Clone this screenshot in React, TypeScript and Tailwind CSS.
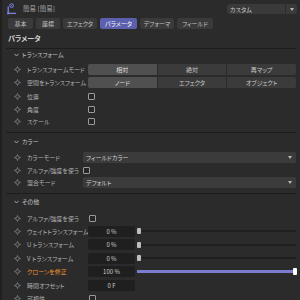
const font = "font-['Noto_Sans_CJK_JP','Noto_Sans',sans-serif] [font-feature-settings:'palt']";

function Key() {
  return (
    <svg width="7" height="7" viewBox="0 0 7 7" className="shrink-0">
      <circle cx="3.5" cy="3.5" r="1.8" fill="none" stroke="#7e7e7e" strokeWidth="1" />
      <path d="M3.5 0.2v1M3.5 5.8v1M0.2 3.5h1M5.8 3.5h1" stroke="#7e7e7e" strokeWidth="0.9" />
    </svg>
  );
}

function Chevron() {
  return (
    <svg width="5" height="4" viewBox="0 0 5 4" className="shrink-0">
      <path d="M0.5 0.8 2.5 3 4.5 0.8" fill="none" stroke="#a8a8a8" strokeWidth="1" />
    </svg>
  );
}

function Arrow() {
  return (
    <svg width="4" height="3" viewBox="0 0 4 3" className="shrink-0">
      <path d="M0 0h4L2 3z" fill="#b8b8b8" />
    </svg>
  );
}

function Check() {
  return <div className="w-[7px] h-[7px] border border-[#9a9a9a] rounded-[1px] bg-[#262626]" />;
}

function GroupHeader({ title }: { title: string }) {
  return (
    <div className="flex items-center h-[12px] pl-[12px] gap-[3px] text-[#c4c4c4]">
      <Chevron />
      <span className="leading-[12px]">{title}</span>
    </div>
  );
}

function Line() {
  return <div className="ml-[4px] mr-[4px] border-t border-[#1d1d1d]" />;
}

function Segments({ items, active }: { items: string[]; active: number }) {
  return (
    <div className="flex-1 flex h-[11px] gap-[1px] rounded-[2px] overflow-hidden">
      {items.map((t, i) => (
        <div
          key={t}
          className={
            i === active
              ? "flex-1 flex items-center justify-center bg-[#505050] text-[#dedede]"
              : "flex-1 flex items-center justify-center bg-[#3b3b3b] text-[#c8c8c8]"
          }
        >
          {t}
        </div>
      ))}
    </div>
  );
}

function Field({ value }: { value: string }) {
  return (
    <div className="w-[47px] h-[11px] shrink-0 rounded-[2px] bg-[#1f1f1f] flex items-center justify-center text-[#cfcfcf]">
      {value}
    </div>
  );
}

function Slider() {
  return (
    <div className="flex-1 flex items-center ml-[2px]">
      <div className="w-[4px] h-[6px] rounded-[1px] bg-[#bdbdbd]" />
      <div className="flex-1 h-[2px] bg-[#1f1f1f]" />
    </div>
  );
}

function Select({ value }: { value: string }) {
  return (
    <div className="flex-1 h-[11px] rounded-[2px] bg-[#3b3b3b] flex items-center justify-between pl-[3px] pr-[4px] text-[#d0d0d0]">
      <span>{value}</span>
      <Arrow />
    </div>
  );
}

export default function App() {
  return (
    <div className={`w-[300px] h-[300px] overflow-hidden bg-[#2b2b2b] border-l-2 border-[#202020] text-[#b2b2b2] text-[6px] ${font}`}>
      {/* title bar */}
      <div className="flex items-center justify-between h-[10px] mt-[4px] pl-[4px] pr-[3px]">
        <div className="flex items-center gap-[6px]">
          <svg width="11" height="12" viewBox="0 0 11 12">
            <path d="M2.2 3.5V10.3H10" fill="none" stroke="#7c82e4" strokeWidth="1.3" />
            <circle cx="5.6" cy="2.6" r="1.9" fill="none" stroke="#7c82e4" strokeWidth="1" />
            <circle cx="5.6" cy="2.6" r="0.6" fill="#7c82e4" />
            <rect x="1.2" y="9.3" width="2" height="2" fill="#7c82e4" />
          </svg>
          <span className="text-[#a8a8a8] text-[6.5px]">簡易 [簡易]</span>
        </div>
        <div className="w-[70px] h-[10px] rounded-[3px] bg-[#3a3a3a] flex items-center overflow-hidden">
          <span className="flex-1 pl-[3px] text-[#cdcdcd]">カスタム</span>
          <div className="w-[12px] h-full border-l border-[#2b2b2b] flex items-center justify-center">
            <Arrow />
          </div>
        </div>
      </div>

      {/* tabs */}
      <div className="flex mt-[4px] h-[11px] pl-[6px] gap-[3px] text-[#c2c2c2]">
        <div className="w-[25px] rounded-[2px] bg-[#3a3a3a] flex items-center justify-center">基本</div>
        <div className="w-[24px] rounded-[2px] bg-[#3a3a3a] flex items-center justify-center">座標</div>
        <div className="w-[34px] rounded-[2px] bg-[#3a3a3a] flex items-center justify-center">エフェクタ</div>
        <div className="w-[37px] rounded-[2px] bg-[#5c5eae] text-white flex items-center justify-center">パラメータ</div>
        <div className="w-[34px] rounded-[2px] bg-[#3a3a3a] flex items-center justify-center">デフォーマ</div>
        <div className="w-[36px] rounded-[2px] bg-[#3a3a3a] flex items-center justify-center">フィールド</div>
      </div>

      <div className="mt-[3px] h-[12px] leading-[12px] pl-[6px] text-[7px] font-bold text-[#d2d2d2]">パラメータ</div>

      <div className="mt-[4px]">
        <Line />
      </div>

      {/* transform */}
      <GroupHeader title="トランスフォーム" />
      <div className="mt-[2px]">
        <div className="flex items-center h-[13px] pl-[12px] pr-[4px]">
          <Key />
          <span className="ml-[6px] w-[61px] shrink-0 whitespace-nowrap">トランスフォームモード</span>
          <Segments items={["相対", "絶対", "再マップ"]} active={0} />
        </div>
        <div className="flex items-center h-[13px] pl-[12px] pr-[4px]">
          <Key />
          <span className="ml-[6px] w-[61px] shrink-0 whitespace-nowrap">空間をトランスフォーム</span>
          <Segments items={["ノード", "エフェクタ", "オブジェクト"]} active={0} />
        </div>
        <div className="flex items-center h-[14px] pl-[12px] pr-[4px]">
          <Key />
          <span className="ml-[6px] w-[61px] shrink-0">位置</span>
          <Check />
        </div>
        <div className="flex items-center h-[12px] pl-[12px] pr-[4px]">
          <Key />
          <span className="ml-[6px] w-[61px] shrink-0">角度</span>
          <Check />
        </div>
        <div className="flex items-center h-[12px] pl-[12px] pr-[4px]">
          <Key />
          <span className="ml-[6px] w-[61px] shrink-0">スケール</span>
          <Check />
        </div>
      </div>

      <div className="mt-[5px]">
        <Line />
      </div>

      {/* color */}
      <div className="mt-[3px]">
        <GroupHeader title="カラー" />
      </div>
      <div className="mt-[3px]">
        <div className="flex items-center h-[13px] pl-[12px] pr-[4px]">
          <Key />
          <span className="ml-[6px] w-[56px] shrink-0">カラーモード</span>
          <Select value="フィールドカラー" />
        </div>
        <div className="flex items-center h-[12px] pl-[12px] pr-[4px]">
          <Key />
          <span className="ml-[6px] w-[56px] shrink-0 whitespace-nowrap">アルファ/強度を使う</span>
          <Check />
        </div>
        <div className="flex items-center h-[13px] pl-[12px] pr-[4px]">
          <Key />
          <span className="ml-[6px] w-[56px] shrink-0">混合モード</span>
          <Select value="デフォルト" />
        </div>
      </div>

      <div className="mt-[4px]">
        <Line />
      </div>

      {/* other */}
      <div className="mt-[2px]">
        <GroupHeader title="その他" />
      </div>
      <div className="mt-[4px]">
        <div className="flex items-center h-[12px] pl-[12px] pr-[4px]">
          <Key />
          <span className="ml-[6px] w-[62px] shrink-0 whitespace-nowrap">アルファ/強度を使う</span>
          <Check />
        </div>
        <div className="flex items-center h-[14px] pl-[12px] pr-[4px]">
          <Key />
          <span className="ml-[6px] w-[61px] shrink-0 whitespace-nowrap">ウェイトトランスフォーム</span>
          <Field value="0 %" />
          <Slider />
        </div>
        <div className="flex items-center h-[13px] pl-[12px] pr-[4px]">
          <Key />
          <span className="ml-[6px] w-[61px] shrink-0 whitespace-nowrap">U トランスフォーム</span>
          <Field value="0 %" />
          <Slider />
        </div>
        <div className="flex items-center h-[14px] pl-[12px] pr-[4px]">
          <Key />
          <span className="ml-[6px] w-[61px] shrink-0 whitespace-nowrap">V トランスフォーム</span>
          <Field value="0 %" />
          <Slider />
        </div>
        <div className="flex items-center h-[13px] pl-[12px] pr-[3px]">
          <Key />
          <span className="ml-[6px] w-[61px] shrink-0 whitespace-nowrap text-[#ee9430]">クローンを修正</span>
          <Field value="100 %" />
          <div className="flex-1 flex items-center ml-[2px]">
            <div className="flex-1 h-[3px] bg-[#7a7cd0]" />
            <div className="w-[4px] h-[7px] rounded-[1px] bg-white" />
          </div>
        </div>
        <div className="flex items-center h-[14px] pl-[12px] pr-[4px]">
          <Key />
          <span className="ml-[6px] w-[61px] shrink-0">時間オフセット</span>
          <Field value="0 F" />
        </div>
        <div className="flex items-center h-[12px] pl-[12px] pr-[4px]">
          <Key />
          <span className="ml-[6px] w-[62px] shrink-0">可視性</span>
          <Check />
        </div>
      </div>
    </div>
  );
}
